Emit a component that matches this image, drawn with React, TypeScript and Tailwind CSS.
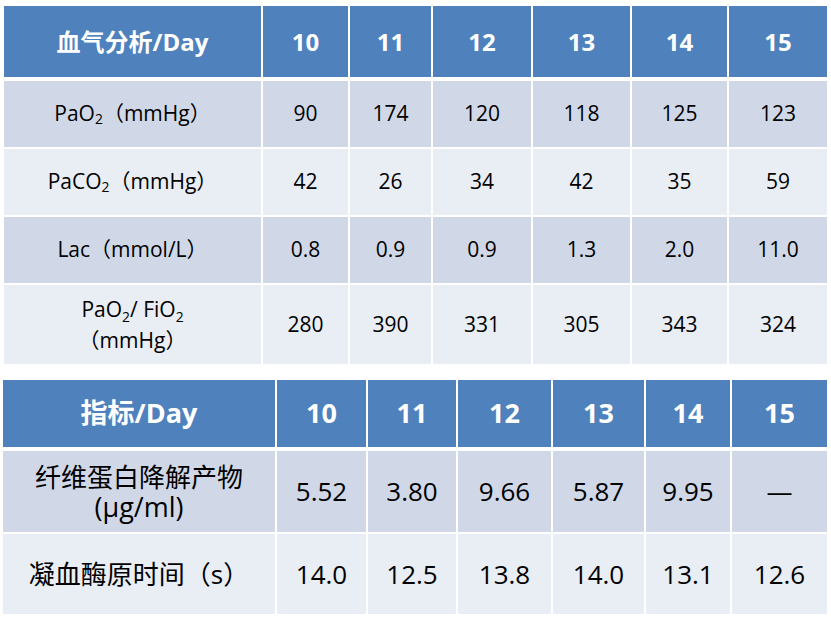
import React from "react";

const font = { fontFamily: '"Open Sans", "Noto Sans CJK SC", sans-serif' };

const Sub = ({ children }: { children: React.ReactNode }) => (
  <span className="text-[0.66em] relative top-[0.38em]">{children}</span>
);

const days = ["10", "11", "12", "13", "14", "15"];

const t1Rows: { label: React.ReactNode; vals: string[]; bg: string; h: string }[] = [
  {
    label: (
      <>
        PaO<Sub>2</Sub>（mmHg）
      </>
    ),
    vals: ["90", "174", "120", "118", "125", "123"],
    bg: "bg-[#d0d8e8]",
    h: "h-[66px]",
  },
  {
    label: (
      <>
        PaCO<Sub>2</Sub>（mmHg）
      </>
    ),
    vals: ["42", "26", "34", "42", "35", "59"],
    bg: "bg-[#e9edf4]",
    h: "h-[66px]",
  },
  {
    label: <>Lac（mmol/L）</>,
    vals: ["0.8", "0.9", "0.9", "1.3", "2.0", "11.0"],
    bg: "bg-[#d0d8e8]",
    h: "h-[66px]",
  },
  {
    label: (
      <span className="flex flex-col items-center leading-[28px]">
        <span>
          PaO<Sub>2</Sub>/ FiO<Sub>2</Sub>
        </span>
        <span>（mmHg）</span>
      </span>
    ),
    vals: ["280", "390", "331", "305", "343", "324"],
    bg: "bg-[#e9edf4]",
    h: "h-[79px]",
  },
];

const t2Rows: { label: React.ReactNode; vals: string[]; bg: string; h: string }[] = [
  {
    label: (
      <span className="flex flex-col items-center leading-[30px]">
        <span>纤维蛋白降解产物</span>
        <span className="text-[27px]">(μg/ml)</span>
      </span>
    ),
    vals: ["5.52", "3.80", "9.66", "5.87", "9.95", "—"],
    bg: "bg-[#d0d8e8]",
    h: "h-[81px]",
  },
  {
    label: <>凝血酶原时间（s）</>,
    vals: ["14.0", "12.5", "13.8", "14.0", "13.1", "12.6"],
    bg: "bg-[#e9edf4]",
    h: "h-[80px]",
  },
];

export default function App() {
  return (
    <div className="w-[831px] h-[618px] bg-white pt-[6px] overflow-hidden" style={font}>
      {/* Table 1 */}
      <div className="ml-[4px] w-[823px] flex flex-col gap-[2px]">
        <div className="grid grid-cols-[257px_85px_81px_98px_97px_95px_98px] gap-x-[2px] h-[71px] mb-[2px] text-white font-bold text-[24px]">
          <div className="bg-[#4f81bd] flex items-center justify-center">血气分析/Day</div>
          {days.map((d) => (
            <div key={d} className="bg-[#4f81bd] flex items-center justify-center">
              {d}
            </div>
          ))}
        </div>
        {t1Rows.map((r, i) => (
          <div
            key={i}
            className={`grid grid-cols-[257px_85px_81px_98px_97px_95px_98px] gap-x-[2px] ${r.h} text-[21px] text-black`}
          >
            <div className={`${r.bg} flex items-center justify-center`}>{r.label}</div>
            {r.vals.map((v, j) => (
              <div key={j} className={`${r.bg} flex items-center justify-center`}>
                {v}
              </div>
            ))}
          </div>
        ))}
      </div>

      {/* Table 2 */}
      <div className="ml-[3px] mt-[16px] w-[824px] flex flex-col gap-[2px]">
        <div className="grid grid-cols-[272px_89px_88px_93px_91px_84px_95px] gap-x-[2px] h-[67px] mb-[2px] text-white font-bold text-[27px]">
          <div className="bg-[#4f81bd] flex items-center justify-center">指标/Day</div>
          {days.map((d) => (
            <div key={d} className="bg-[#4f81bd] flex items-center justify-center">
              {d}
            </div>
          ))}
        </div>
        {t2Rows.map((r, i) => (
          <div
            key={i}
            className={`grid grid-cols-[272px_89px_88px_93px_91px_84px_95px] gap-x-[2px] ${r.h} text-[26px] text-black`}
          >
            <div className={`${r.bg} flex items-center justify-center`}>{r.label}</div>
            {r.vals.map((v, j) => (
              <div key={j} className={`${r.bg} flex items-center justify-center`}>
                {v}
              </div>
            ))}
          </div>
        ))}
      </div>
    </div>
  );
}
